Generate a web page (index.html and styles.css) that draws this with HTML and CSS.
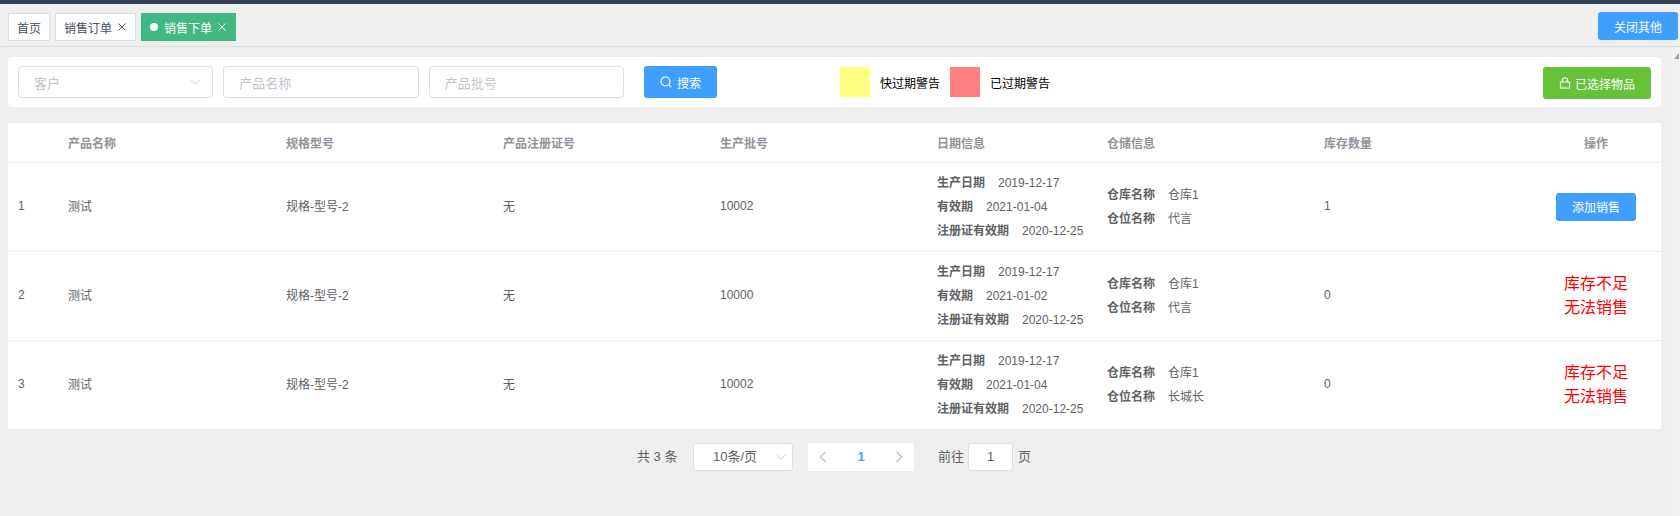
FILE: index.html
```html
<!DOCTYPE html>
<html lang="zh">
<head>
<meta charset="utf-8">
<title>销售下单</title>
<link rel="stylesheet" href="styles.css">
</head>
<body>
<div class="topbar"></div>
<nav class="tabs">
  <a class="tab">首页</a>
  <a class="tab">销售订单<svg class="x" viewBox="0 0 10 10"><path d="M1.5 1.5l7 7M8.5 1.5l-7 7"/></svg></a>
  <a class="tab active"><i class="dot"></i>销售下单<svg class="x" viewBox="0 0 10 10"><path d="M1.5 1.5l7 7M8.5 1.5l-7 7"/></svg></a>
  <button class="btn blue close-others">关闭其他</button>
</nav>
<div class="scroll-track"><svg class="scroll-up" viewBox="0 0 10 6"><path d="M0 6L5 0v6z"/></svg></div>
<main class="content">
  <section class="search">
    <div class="input select"><span>客户</span><svg class="chev" viewBox="0 0 14 8"><path d="M1 1l6 6 6-6"/></svg></div>
    <div class="input"><span>产品名称</span></div>
    <div class="input"><span>产品批号</span></div>
    <button class="btn blue search-btn"><svg class="ico" viewBox="0 0 12 12"><circle cx="5.5" cy="5.5" r="4.5"/><path d="M9 9l2 2"/></svg>搜索</button>
    <div class="legend">
      <i class="swatch yellow"></i><span class="legend-text">快过期警告</span>
      <i class="swatch red"></i><span class="legend-text">已过期警告</span>
    </div>
    <button class="btn green cart-btn"><svg class="ico" viewBox="0 0 12 12"><path d="M1.5 5h9v6h-9zM3.5 5V2.5q0-1.5 1.5-1.5h2q1.5 0 1.5 1.5V5"/></svg>已选择物品</button>
  </section>
  <table class="grid">
    <colgroup>
      <col class="c-index"><col class="c-wide"><col class="c-std"><col class="c-std"><col class="c-std"><col class="c-date"><col class="c-std"><col class="c-wide"><col class="c-op">
    </colgroup>
    <thead>
      <tr><th></th><th>产品名称</th><th>规格型号</th><th>产品注册证号</th><th>生产批号</th><th>日期信息</th><th>仓储信息</th><th>库存数量</th><th class="center">操作</th></tr>
    </thead>
    <tbody>
      <tr>
        <td>1</td><td>测试</td><td>规格-型号-2</td><td>无</td><td>10002</td>
        <td class="info"><p><b>生产日期</b>2019-12-17</p><p><b>有效期</b>2021-01-04</p><p><b>注册证有效期</b>2020-12-25</p></td>
        <td class="info"><p><b>仓库名称</b>仓库1</p><p><b>仓位名称</b>代言</p></td>
        <td>1</td>
        <td class="center action"><button class="btn blue add-btn">添加销售</button></td>
      </tr>
      <tr>
        <td>2</td><td>测试</td><td>规格-型号-2</td><td>无</td><td>10000</td>
        <td class="info"><p><b>生产日期</b>2019-12-17</p><p><b>有效期</b>2021-01-02</p><p><b>注册证有效期</b>2020-12-25</p></td>
        <td class="info"><p><b>仓库名称</b>仓库1</p><p><b>仓位名称</b>代言</p></td>
        <td>0</td>
        <td class="center warn">库存不足<br>无法销售</td>
      </tr>
      <tr>
        <td>3</td><td>测试</td><td>规格-型号-2</td><td>无</td><td>10002</td>
        <td class="info"><p><b>生产日期</b>2019-12-17</p><p><b>有效期</b>2021-01-04</p><p><b>注册证有效期</b>2020-12-25</p></td>
        <td class="info"><p><b>仓库名称</b>仓库1</p><p><b>仓位名称</b>长城长</p></td>
        <td>0</td>
        <td class="center warn">库存不足<br>无法销售</td>
      </tr>
    </tbody>
  </table>
  <footer class="pager">
    <span class="total">共 3 条</span>
    <div class="page-size">10条/页<svg class="chev" viewBox="0 0 14 8"><path d="M1 1l6 6 6-6"/></svg></div>
    <div class="pages">
      <svg class="arrow" viewBox="0 0 8 12"><path d="M6.5 1L1.5 6l5 5"/></svg>
      <b class="num">1</b>
      <svg class="arrow" viewBox="0 0 8 12"><path d="M1.5 1l5 5-5 5"/></svg>
    </div>
    <span class="jump">前往</span>
    <div class="page-input">1</div>
    <span class="jump-end">页</span>
  </footer>
</main>
</body>
</html>
```
FILE: styles.css
```css
* { box-sizing: border-box; }
html, body { margin: 0; height: 516px; overflow: hidden; }
body {
  position: relative;
  background: #efefef;
  font-family: "Liberation Sans", "Noto Sans CJK SC", sans-serif;
  font-size: 12px;
  color: #606266;
}
.topbar { height: 4px; background: #304156; }
.tabs {
  height: 43px;
  padding: 9px 2px 0 8px;
  display: flex;
  align-items: flex-start;
  gap: 5px;
  border-bottom: 1px solid #d8dce5;
}
.tab {
  height: 28px;
  padding: 0 8px;
  display: flex;
  align-items: center;
  background: #fff;
  border: 1px solid #d8dce5;
  color: #495060;
}
.tab.active { background: #42b983; border-color: #42b983; color: #fff; }
.dot { width: 8px; height: 8px; border-radius: 50%; background: #fff; margin-right: 6px; }
.x { width: 10px; height: 10px; margin-left: 5px; fill: none; stroke: currentColor; stroke-width: 1; }
.btn {
  border: 0;
  border-radius: 3px;
  color: #fff;
  font: inherit;
  padding: 0;
  display: flex;
  align-items: center;
  justify-content: center;
}
.blue { background: #409eff; }
.green { background: #67c23a; }
.close-others { margin-left: auto; margin-top: -1px; width: 80px; height: 28px; }
.scroll-track {
  position: absolute;
  top: 47px;
  right: 0;
  bottom: 0;
  width: 10px;
  background: #f1f1f1;
}
.scroll-up { position: absolute; top: 6px; right: -4px; width: 10px; height: 6px; fill: #a3a3a3; }
.content { padding: 10px 19px 0 8px; }
.search {
  height: 50px;
  background: #fff;
  border-radius: 4px;
  padding: 9px 10px 0;
  display: flex;
  align-items: flex-start;
}
.input {
  width: 195.33px;
  height: 32px;
  margin-right: 10px;
  padding: 0 15px;
  border: 1px solid #dcdfe6;
  border-radius: 4px;
  display: flex;
  align-items: center;
  justify-content: space-between;
  color: #c0c4cc;
  font-size: 13px;
}
.select { padding-right: 11px; }
.chev { width: 11px; height: 6px; fill: none; stroke: #c0c4cc; stroke-width: 1.2; }
.ico { width: 12px; height: 12px; margin-right: 5px; fill: none; stroke: #fff; stroke-width: 1.2; }
.search-btn { width: 73px; height: 32px; margin-left: 10px; }
.legend { display: flex; align-items: center; height: 30px; margin-left: 123px; margin-top: 1px; color: #000; }
.swatch { width: 30px; height: 30px; }
.yellow { background: #ffff80; }
.red { background: #ff8080; }
.legend-text { width: 80px; padding-left: 10px; white-space: nowrap; }
.cart-btn { width: 108px; height: 32px; margin-left: auto; margin-top: 1px; }
.cart-btn .ico { margin-right: 4px; }
.grid {
  width: 1653px;
  margin-top: 16px;
  table-layout: fixed;
  border-collapse: collapse;
  background: #fff;
}
.c-index { width: 50px; }
.c-wide { width: 218px; }
.c-std { width: 217px; }
.c-date { width: 170px; }
.c-op { width: 129px; }
th {
  height: 39px;
  padding: 0 10px;
  text-align: left;
  font-weight: 700;
  color: #909399;
  border-bottom: 1px solid #ebeef5;
}
td {
  height: 89px;
  padding: 0 10px 2px;
  border-bottom: 1px solid #ebeef5;
}
th.center { text-align: center; padding-right: 11px; }
.center { text-align: center; }
.info { padding: 1px 10px 0; }
.info p { margin: 0; line-height: 24px; white-space: nowrap; }
.info b { margin-right: 13px; }
.warn { color: #f00; font-size: 16px; line-height: 24px; padding: 0 1px 0 0; }
.action { padding: 0 1px 0 0; }
.add-btn { width: 80px; height: 28px; margin: 0 auto; }
.pager {
  display: flex;
  align-items: center;
  height: 28px;
  margin-top: 13px;
  padding-left: 629px;
  font-size: 13px;
  line-height: 26px;
}
.total { width: 56px; }
.page-size {
  width: 100px;
  height: 28px;
  background: #fff;
  border: 1px solid #dcdfe6;
  border-radius: 3px;
  display: flex;
  align-items: center;
  justify-content: space-between;
  padding: 0 6px 0 19px;
}
.page-size .chev { width: 10px; height: 6px; }
.pages {
  width: 106px;
  height: 28px;
  margin-left: 15px;
  background: #fff;
  display: flex;
  align-items: center;
  justify-content: space-between;
  padding: 0 11px;
}
.arrow { width: 8px; height: 12px; fill: none; stroke: #c0c4cc; stroke-width: 1.5; }
.num { color: #409eff; font-size: 13px; }
.jump { margin-left: 24px; width: 30px; }
.page-input {
  width: 45px;
  height: 28px;
  background: #fff;
  border: 1px solid #dcdfe6;
  border-radius: 3px;
  display: flex;
  align-items: center;
  justify-content: center;
}
.jump-end { margin-left: 5px; }
```
